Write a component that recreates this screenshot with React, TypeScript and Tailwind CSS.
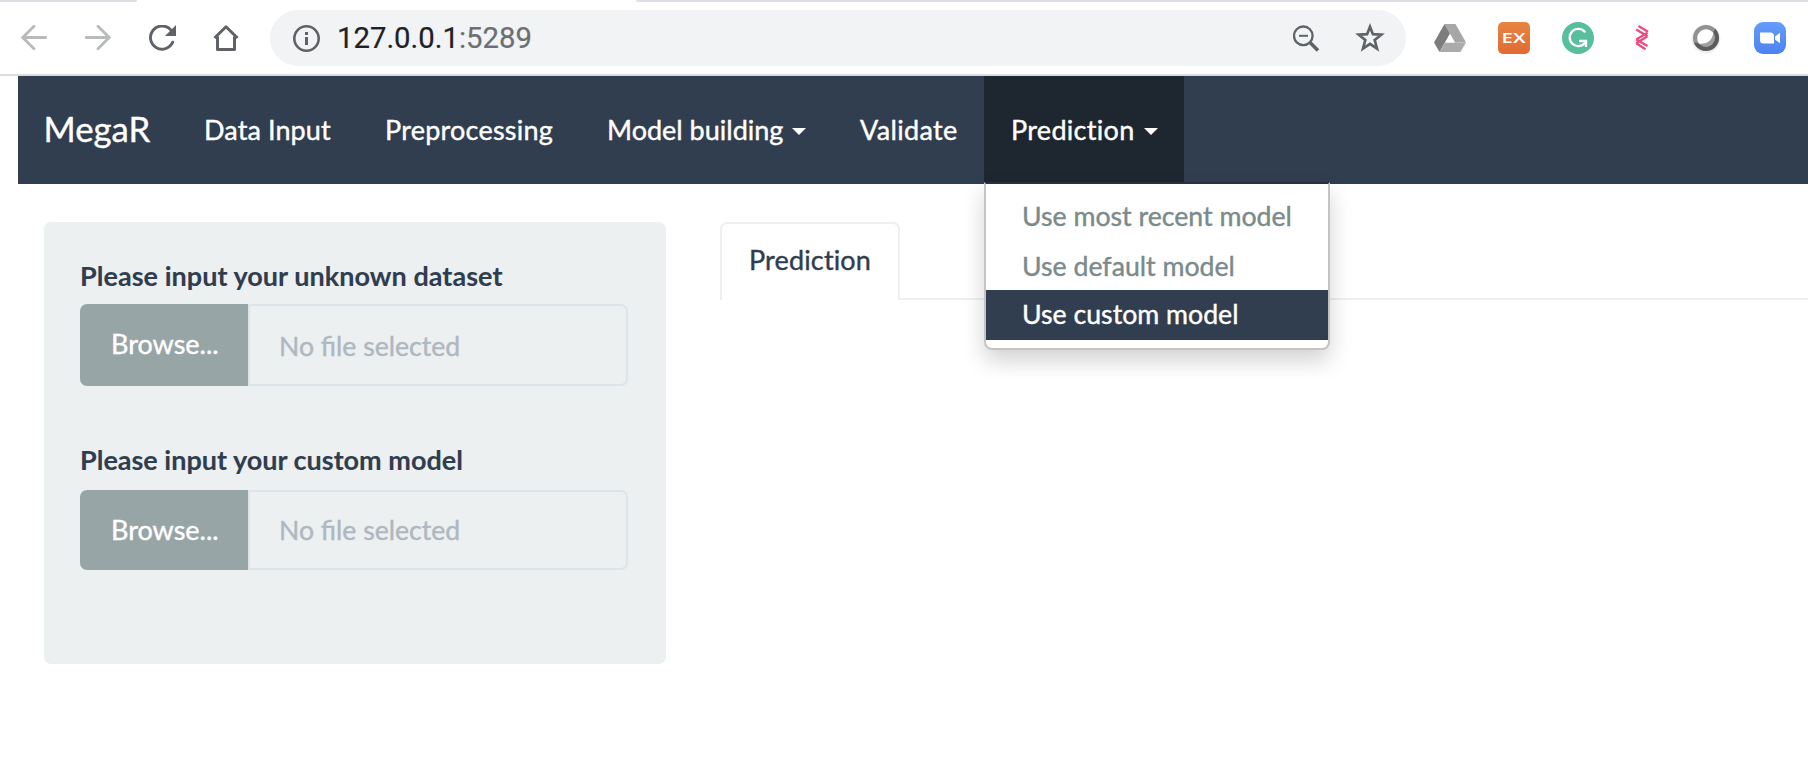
import type { ReactNode } from 'react';

type DrawProps = { children: ReactNode; w: number; h: number; className?: string };

const Draw = ({ children, w, h, className = '' }: DrawProps) => (
  <svg width={w} height={h} viewBox={`0 0 ${w} ${h}`} fill="none" className={`block shrink-0 ${className}`}>
    {children}
  </svg>
);

const Caret = () => (
  <span className="mt-[3px] ml-[9px] h-0 w-0 border-x-[7px] border-t-[7px] border-x-transparent border-t-white" />
);

function TabStrip() {
  return (
    <div className="flex h-0.5 justify-between bg-white">
      <div className="w-[137px] rounded-br-[3px] bg-[#dfdfe5]" />
      <div className="w-[1172px] rounded-bl-[3px] bg-[#dfdfe5]" />
    </div>
  );
}

function Toolbar() {
  return (
    <div className="flex h-[74px] items-center border-b-2 border-[#dadce0] bg-white">
      <Draw w={26} h={26} className="ml-[21px]">
        <path d="M25 12.500H2M13 1.300L1.800 12.500L13 23.700" stroke="#b9babc" strokeWidth="2.800" strokeLinecap="round" />
      </Draw>
      <Draw w={26} h={26} className="ml-[38px]">
        <path d="M1 12.500H24M13 1.300L24.200 12.500L13 23.700" stroke="#b9babc" strokeWidth="2.800" strokeLinecap="round" />
      </Draw>
      <Draw w={28} h={26} className="ml-[38px]">
        <path d="M23.700 17.200A11.600 11.600 0 1 1 21.500 4.600" stroke="#5f6368" strokeWidth="2.900" strokeLinecap="round" />
        <path d="M27 0V11H16Z" fill="#5f6368" />
      </Draw>
      <Draw w={26} h={26} className="ml-[36px]">
        <path d="M1.500 13L13 1.800L24.500 13M4.500 11.500V24.500H21.500V11.500" stroke="#5f6368" strokeWidth="3" strokeLinejoin="round" />
      </Draw>
      <div className="ml-[31px] flex h-14 w-[1136px] items-center rounded-full bg-[#f1f3f4] pr-[21px] pl-[23px]">
        <Draw w={28} h={28}>
          <circle cx="13.500" cy="14.500" r="12.200" stroke="#5f6368" strokeWidth="2.600" />
          <path d="M13.500 13V21M13.500 8V11" stroke="#5f6368" strokeWidth="3" />
        </Draw>
        <span className="ml-[16px] font-['Roboto',sans-serif] text-[29.3px] leading-8 text-[#202124] [-webkit-text-stroke:0.2px]">
          127.0.0.1<span className="text-[#6b6e72]">:5289</span>
        </span>
        <Draw w={27} h={27} className="ml-auto">
          <circle cx="10.300" cy="10.800" r="9.300" stroke="#5f6368" strokeWidth="2.300" />
          <path d="M6 10.800H15" stroke="#5f6368" strokeWidth="2" />
          <path d="M17 17.500L25 25.500" stroke="#5f6368" strokeWidth="3.500" />
        </Draw>
        <Draw w={30} h={30} className="ml-[35px]">
          <path d="M15 3.800L17.900 11.200L26.300 11.700L19.700 17L22 25.500L15 20.800L8 25.500L10.300 17L3.700 11.700L12.100 11.200Z" stroke="#5f6368" strokeWidth="2.700" />
        </Draw>
      </div>
      <Draw w={32} h={28} className="ml-[28px]">
        <path d="M10.500 0H21.500L32 18.500H21L16 9.500Z" fill="#a7a7a7" />
        <path d="M10.500 0L0 18.500L5.500 28L16 9.500Z" fill="#7d7d7d" />
        <path d="M11 18.500H32L26.500 28H5.500Z" fill="#ababab" />
        <path d="M16 11L20.500 18.500H11.500Z" fill="#fff" />
      </Draw>
      <div className="ml-8 flex h-8 w-8 items-center justify-center rounded-[5px] bg-linear-to-b from-[#e78542] to-[#e06b33]">
        <span className="inline-block scale-x-[1.4] font-['Open_Sans',sans-serif] text-[14.5px] leading-none font-semibold text-white [-webkit-text-stroke:0px]">EX</span>
      </div>
      <Draw w={32} h={32} className="ml-8">
        <circle cx="16" cy="16" r="16" fill="#57bf9b" />
        <path d="M22.600 9.600A8.600 8.600 0 1 0 23.400 20.300" stroke="#fff" strokeWidth="2.300" strokeLinecap="round" />
        <path d="M17 19H24V25" stroke="#fff" strokeWidth="2.300" />
      </Draw>
      <Draw w={14} h={26} className="ml-[41px]">
        <path d="M3.500 1L13 6.800M1.200 4.500L12.500 11.300M1.200 14.500L12.500 7.800M1.200 18.300L12.500 11.300M1.200 14.500L12.500 21M1.200 18.300L10.500 24.300" stroke="#ea4c80" strokeWidth="2.300" />
      </Draw>
      <Draw w={32} h={32} className="ml-[42px]">
        <circle cx="15" cy="17" r="14.500" fill="#efefef" />
        <circle cx="15" cy="16" r="13" fill="#929292" />
        <path d="M24.200 6.800A13 13 0 1 1 2.800 20.500L9 21.500Q19 22 21 13Z" fill="#5c5c5c" />
        <circle cx="15" cy="16" r="9" fill="#a0a0a0" />
        <path d="M22.500 11A9 9 0 1 0 8 21.700Q20 23 22.500 11Z" fill="#fff" />
      </Draw>
      <Draw w={32} h={32} className="ml-[31px]">
        <defs>
          <linearGradient id="zoom" x1="0" y1="0" x2="0" y2="1">
            <stop stopColor="#649dfa" />
            <stop offset="1" stopColor="#4c82f1" />
          </linearGradient>
        </defs>
        <rect width="32" height="32" rx="9" fill="url(#zoom)" />
        <path d="M6 10.500H16.500Q20 10.500 20 14V21.500H9.500Q6 21.500 6 18Z" fill="#fff" />
        <path d="M21 14.500L26 10.800V21.200L21 17.500Z" fill="#fff" />
      </Draw>
    </div>
  );
}

function ModelMenu() {
  return (
    <div className="absolute top-[106px] left-0 z-10 h-[168px] w-[346px] rounded-b-[8px] border-2 border-[#c4c4c4] border-t-[#28313d] bg-white pt-[6px] text-[26.7px] text-[#7b8a8b] shadow-[0_11px_22px_rgba(0,0,0,0.175)]">
      <div className="h-[50px] pl-[36px] leading-[52px]">Use most recent model</div>
      <div className="h-[50px] pl-[36px] leading-[52px]">Use default model</div>
      <div className="h-[50px] bg-[#313e4f] pl-[36px] leading-[48px] text-white">Use custom model</div>
    </div>
  );
}

function NavBar() {
  return (
    <nav className="ml-[18px] flex h-[108px] items-center bg-[#313e4f] text-white">
      <span className="w-[159px] pb-px pl-[25.5px] text-[34.7px]">MegaR</span>
      <span className="w-[181px] pl-[27px] tracking-[0.1px]">Data Input</span>
      <span className="w-[222px] pl-[27px] tracking-[0.23px]">Preprocessing</span>
      <span className="flex w-[253px] items-center pl-[27px]">Model building<Caret /></span>
      <span className="w-[151px] pl-[27px] tracking-[0.35px]">Validate</span>
      <div className="relative flex h-full w-[200px] items-center bg-[#1e262f] pl-[27px]">
        <span className="tracking-[0.3px]">Prediction</span>
        <Caret />
        <ModelMenu />
      </div>
    </nav>
  );
}

function SidePanel() {
  return (
    <section className="flex h-[442px] w-[622px] flex-col rounded-[7px] bg-[#ecf0f1] pt-[35px] pr-[38px] pl-9">
      <div className="leading-[38px] font-bold tracking-[0.04px] [-webkit-text-stroke:0.1px]">Please input your unknown dataset</div>
      <div className="mt-[9px] flex h-[82px]">
        <div className="flex w-[168px] items-center rounded-l-[7px] bg-[#98a5a6] pb-px pl-[31px] text-white">Browse...</div>
        <div className="flex flex-1 items-center rounded-r-[7px] border-2 border-[#dde4ea] pt-[3px] pl-[29px] text-[26.6px] text-[#afb7c0]">No file selected</div>
      </div>
      <div className="mt-[55px] leading-[38px] font-bold [-webkit-text-stroke:0.1px]">Please input your custom model</div>
      <div className="mt-[11px] flex h-20">
        <div className="flex w-[168px] items-center rounded-l-[7px] bg-[#98a5a6] pl-[31px] text-white">Browse...</div>
        <div className="flex flex-1 items-center rounded-r-[7px] border-2 border-[#dde4ea] pt-px pl-[29px] text-[26.6px] text-[#afb7c0]">No file selected</div>
      </div>
    </section>
  );
}

export default function App() {
  return (
    <div className="h-[766px] w-[1808px] overflow-hidden bg-white font-['Lato',sans-serif] text-[27px] text-[#303d4e] [-webkit-text-stroke:0.4px]">
      <TabStrip />
      <Toolbar />
      <NavBar />
      <main className="flex pt-[38px] pl-[44px]">
        <SidePanel />
        <div className="ml-[54px] flex h-[78px] flex-1">
          <div className="flex w-[180px] items-center rounded-t-[7px] border-2 border-b-0 border-[#ecf0f1] pb-[3px] pl-[27px] tracking-[0.15px]">Prediction</div>
          <div className="flex-1 border-b-2 border-[#ecf0f1]" />
        </div>
      </main>
    </div>
  );
}
